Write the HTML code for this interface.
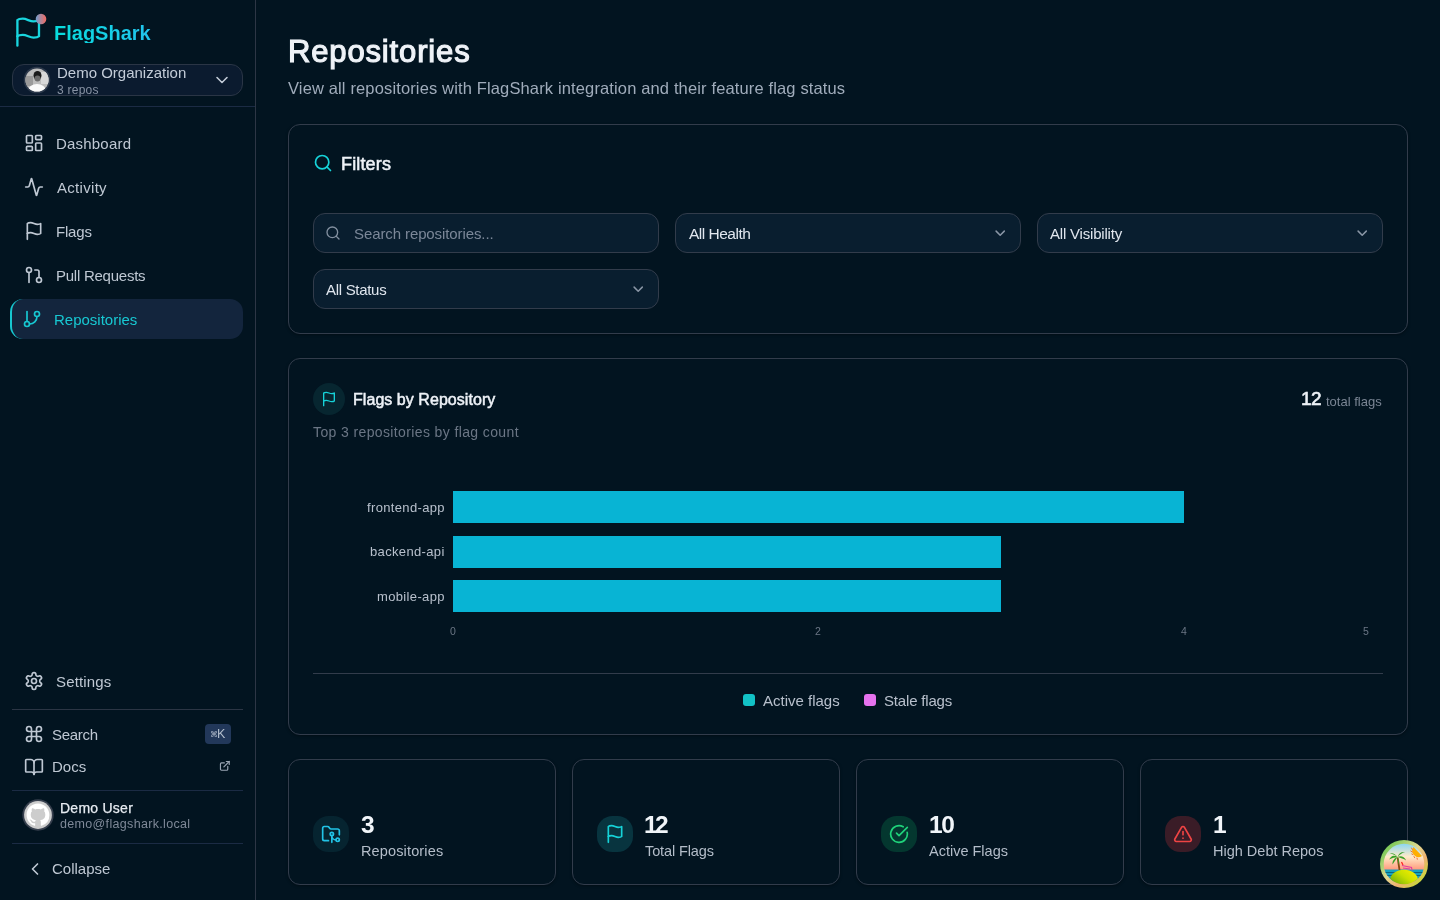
<!DOCTYPE html>
<html><head><meta charset="utf-8">
<style>
*{box-sizing:border-box;margin:0;padding:0}
html,body{width:1440px;height:900px;overflow:hidden;background:#021420;font-family:"Liberation Sans",sans-serif}
.abs{position:absolute;display:block}
.t{position:absolute;line-height:1;white-space:nowrap;will-change:transform}
.box{position:absolute}
</style></head>
<body>
<div class="box" style="left:255px;top:0;width:1px;height:900px;background:#2d3645"></div>
<svg class="abs" style="left:11.8px;top:16.2px" width="32.4" height="32.4" viewBox="0 0 24 24" fill="none" stroke="#19d6df" stroke-width="1.72" stroke-linecap="round" stroke-linejoin="round"><path d="M4 15s1-1 4-1 5 2 8 2 4-1 4-1V3s-1 1-4 1-5-2-8-2-4 1-4 1z"/><line x1="4" x2="4" y1="22" y2="15"/></svg>
<svg class="abs" style="left:35px;top:13px" width="12" height="12"><defs><linearGradient id="dg" x1="0" x2="1" y1="0" y2="0"><stop offset="0" stop-color="#6f9fd0"/><stop offset="1" stop-color="#f4695f"/></linearGradient></defs><circle cx="6" cy="6" r="5.3" fill="url(#dg)"/></svg>
<div class="t" style="left:54px;top:22.77px;font-size:20px;color:transparent;font-weight:bold;background:linear-gradient(90deg,#07dcdc,#22c4ee);-webkit-background-clip:text;background-clip:text;">FlagShark</div>
<div class="box" style="left:12px;top:64px;width:231px;height:32px;border:1px solid #2a3545;border-radius:12px;background:#0b1b2f"></div>
<svg class="abs" style="left:23px;top:66px" width="28" height="28" viewBox="0 0 28 28">
<defs><clipPath id="oc"><circle cx="14" cy="14" r="11.6"/></clipPath></defs>
<circle cx="14" cy="14" r="13.3" fill="#2c394b"/>
<g clip-path="url(#oc)"><rect width="28" height="28" fill="#bdbdbd"/><rect x="2" y="10" width="8" height="10" fill="#9a9a9a"/><rect x="18" y="6" width="8" height="12" fill="#d8d8d8"/>
<ellipse cx="14.5" cy="9.5" rx="4" ry="4.5" fill="#1a1a1a"/><ellipse cx="14.5" cy="12.5" rx="3" ry="3" fill="#6a6a6a"/>
<ellipse cx="14" cy="25" rx="9" ry="7" fill="#fafafa"/></g></svg>
<div class="t" style="left:57px;top:65.10px;font-size:15px;color:#c3ccd8;font-weight:normal;">Demo Organization</div>
<div class="t" style="left:57px;top:83.74px;font-size:12px;color:#8792a3;font-weight:normal;letter-spacing:0.25px;">3 repos</div>
<svg class="abs" style="left:212px;top:70px" width="20" height="20" viewBox="0 0 24 24" fill="none" stroke="#c3ccd8" stroke-width="1.9" stroke-linecap="round" stroke-linejoin="round"><path d="m6 9 6 6 6-6"/></svg>
<div class="box" style="left:0px;top:106px;width:255px;height:1px;background:#1b2b44"></div>
<svg class="abs" style="left:24px;top:133.3px" width="20" height="20" viewBox="0 0 24 24" fill="none" stroke="#bfc8d3" stroke-width="2" stroke-linecap="round" stroke-linejoin="round"><rect x="3" y="3" width="7" height="9" rx="1"/><rect x="14" y="3" width="7" height="5" rx="1"/><rect x="14" y="12" width="7" height="9" rx="1"/><rect x="3" y="16" width="7" height="5" rx="1"/></svg>
<div class="t" style="left:55.5px;top:136.30px;font-size:15px;color:#bfc8d3;font-weight:normal;letter-spacing:0.2px;">Dashboard</div>
<svg class="abs" style="left:24px;top:177.3px" width="20" height="20" viewBox="0 0 24 24" fill="none" stroke="#bfc8d3" stroke-width="2" stroke-linecap="round" stroke-linejoin="round"><path d="M22 12h-2.48a2 2 0 0 0-1.93 1.46l-2.35 8.36a.25.25 0 0 1-.48 0L9.24 2.18a.25.25 0 0 0-.48 0l-2.35 8.36A2 2 0 0 1 4.49 12H2"/></svg>
<div class="t" style="left:56.5px;top:180.30px;font-size:15px;color:#bfc8d3;font-weight:normal;letter-spacing:0.3px;">Activity</div>
<svg class="abs" style="left:24px;top:221.3px" width="20" height="20" viewBox="0 0 24 24" fill="none" stroke="#bfc8d3" stroke-width="2" stroke-linecap="round" stroke-linejoin="round"><path d="M4 15s1-1 4-1 5 2 8 2 4-1 4-1V3s-1 1-4 1-5-2-8-2-4 1-4 1z"/><line x1="4" x2="4" y1="22" y2="15"/></svg>
<div class="t" style="left:55.5px;top:224.30px;font-size:15px;color:#bfc8d3;font-weight:normal;letter-spacing:-0.2px;">Flags</div>
<svg class="abs" style="left:24px;top:265.3px" width="20" height="20" viewBox="0 0 24 24" fill="none" stroke="#bfc8d3" stroke-width="2" stroke-linecap="round" stroke-linejoin="round"><circle cx="18" cy="18" r="3"/><circle cx="6" cy="6" r="3"/><path d="M13 6h3a2 2 0 0 1 2 2v7"/><line x1="6" x2="6" y1="9" y2="21"/></svg>
<div class="t" style="left:55.5px;top:268.30px;font-size:15px;color:#bfc8d3;font-weight:normal;letter-spacing:-0.25px;">Pull Requests</div>
<div class="box" style="left:10px;top:299px;width:233px;height:40px;border-radius:13px;background:#13253d;border-left:2px solid #17c6cf"></div>
<svg class="abs" style="left:22.3px;top:309.3px" width="20" height="20" viewBox="0 0 24 24" fill="none" stroke="#17c8d2" stroke-width="2" stroke-linecap="round" stroke-linejoin="round"><line x1="6" x2="6" y1="3" y2="15"/><circle cx="18" cy="6" r="3"/><circle cx="6" cy="18" r="3"/><path d="M18 9a9 9 0 0 1-9 9"/></svg>
<div class="t" style="left:53.5px;top:311.70px;font-size:15px;color:#17c8d2;font-weight:normal;">Repositories</div>
<svg class="abs" style="left:24px;top:671px" width="20" height="20" viewBox="0 0 24 24" fill="none" stroke="#bfc8d3" stroke-width="2" stroke-linecap="round" stroke-linejoin="round"><path d="M12.22 2h-.44a2 2 0 0 0-2 2v.18a2 2 0 0 1-1 1.73l-.43.25a2 2 0 0 1-2 0l-.15-.08a2 2 0 0 0-2.73.73l-.22.38a2 2 0 0 0 .73 2.730l.15.1a2 2 0 0 1 1 1.72v.51a2 2 0 0 1-1 1.74l-.15.09a2 2 0 0 0-.73 2.73l.22.38a2 2 0 0 0 2.73.73l.15-.08a2 2 0 0 1 2 0l.43.25a2 2 0 0 1 1 1.73V20a2 2 0 0 0 2 2h.44a2 2 0 0 0 2-2v-.18a2 2 0 0 1 1-1.73l.43-.25a2 2 0 0 1 2 0l.15.08a2 2 0 0 0 2.73-.73l.22-.39a2 2 0 0 0-.73-2.73l-.15-.08a2 2 0 0 1-1-1.74v-.5a2 2 0 0 1 1-1.74l.15-.09a2 2 0 0 0 .73-2.73l-.22-.38a2 2 0 0 0-2.73-.73l-.15.08a2 2 0 0 1-2 0l-.43-.25a2 2 0 0 1-1-1.73V4a2 2 0 0 0-2-2z"/><circle cx="12" cy="12" r="3"/></svg>
<div class="t" style="left:55.5px;top:674.30px;font-size:15px;color:#bfc8d3;font-weight:normal;letter-spacing:0.15px;">Settings</div>
<div class="box" style="left:12px;top:709px;width:231px;height:1px;background:#2b3544"></div>
<svg class="abs" style="left:24px;top:724px" width="20" height="20" viewBox="0 0 24 24" fill="none" stroke="#bfc8d3" stroke-width="2" stroke-linecap="round" stroke-linejoin="round"><path d="M15 6v12a3 3 0 1 0 3-3H6a3 3 0 1 0 3 3V6a3 3 0 1 0-3 3h12a3 3 0 1 0-3-3"/></svg>
<div class="t" style="left:52px;top:727.30px;font-size:15px;color:#bfc8d3;font-weight:normal;letter-spacing:-0.3px;">Search</div>
<div class="box" style="left:205px;top:724px;width:26px;height:20px;border-radius:4px;background:#22385a"></div>
<div class="t" style="left:210.3px;top:730.53px;font-size:8px;color:#a9b5c6;font-weight:normal;">⌘</div>
<div class="t" style="left:217.3px;top:727.72px;font-size:12.5px;color:#b4bfcd;font-weight:normal;">K</div>
<svg class="abs" style="left:24px;top:756.5px" width="20" height="20" viewBox="0 0 24 24" fill="none" stroke="#bfc8d3" stroke-width="2" stroke-linecap="round" stroke-linejoin="round"><path d="M12 7v14"/><path d="M3 18a1 1 0 0 1-1-1V4a1 1 0 0 1 1-1h5a4 4 0 0 1 4 4 4 4 0 0 1 4-4h5a1 1 0 0 1 1 1v13a1 1 0 0 1-1 1h-6a3 3 0 0 0-3 3 3 3 0 0 0-3-3z"/></svg>
<div class="t" style="left:51.5px;top:759.00px;font-size:15px;color:#bfc8d3;font-weight:normal;">Docs</div>
<svg class="abs" style="left:219.1px;top:760.1px" width="11.7" height="11.7" viewBox="0 0 24 24" fill="none" stroke="#9aa5b4" stroke-width="2.4" stroke-linecap="round" stroke-linejoin="round"><path d="M15 3h6v6"/><path d="M10 14 21 3"/><path d="M18 13v6a2 2 0 0 1-2 2H5a2 2 0 0 1-2-2V8a2 2 0 0 1 2-2h6"/></svg>
<div class="box" style="left:12px;top:790px;width:231px;height:1px;background:#1b2b44"></div>
<svg class="abs" style="left:22px;top:799px" width="32" height="32" viewBox="0 0 32 32">
<circle cx="16" cy="16" r="15.7" fill="#363f4d"/><circle cx="16" cy="16" r="13.9" fill="#cdcdcd"/>
<g transform="translate(4.6 4.6) scale(1.425)"><path fill="#ffffff" d="M8 0C3.58 0 0 3.58 0 8c0 3.54 2.29 6.53 5.47 7.59.4.07.55-.17.55-.38 0-.19-.01-.82-.01-1.490-2.01.37-2.53-.49-2.69-.94-.09-.23-.48-.94-.82-1.13-.28-.15-.68-.52-.01-.53.63-.01 1.08.58 1.230.82.72 1.21 1.87.87 2.33.66.07-.52.28-.87.51-1.07-1.78-.2-3.64-.89-3.640-3.95 0-.87.31-1.59.82-2.15-.08-.2-.36-1.02.08-2.12 0 0 .67-.21 2.2.82.64-.18 1.32-.27 2-.27.68 0 1.36.09 2 .27 1.53-1.04 2.2-.82 2.2-.82.44 1.1.16 1.92.08 2.12.51.56.82 1.27.82 2.15 0 3.07-1.87 3.75-3.65 3.95.29.25.54.73.54 1.48 0 1.07-.01 1.93-.01 2.2 0 .21.15.46.55.38A8.013 8.013 0 0016 8c0-4.42-3.58-8-8-8z"/></g>
</svg>
<div class="t" style="left:60px;top:800.65px;font-size:14px;color:#e6ebf1;font-weight:normal;letter-spacing:0.25px;-webkit-text-stroke:0.25px #e6ebf1;">Demo User</div>
<div class="t" style="left:60px;top:818.12px;font-size:12.5px;color:#7f8998;font-weight:normal;letter-spacing:0.33px;">demo@flagshark.local</div>
<div class="box" style="left:12px;top:843px;width:231px;height:1px;background:#1b2b44"></div>
<svg class="abs" style="left:24.5px;top:858.5px" width="20" height="20" viewBox="0 0 24 24" fill="none" stroke="#bfc8d3" stroke-width="2" stroke-linecap="round" stroke-linejoin="round"><path d="m15 18-6-6 6-6"/></svg>
<div class="t" style="left:52px;top:861.00px;font-size:15px;color:#bfc8d3;font-weight:normal;">Collapse</div>
<div class="t" style="left:288px;top:36.06px;font-size:31px;color:#eef2f7;font-weight:normal;letter-spacing:0.85px;-webkit-text-stroke:1.15px #eef2f7;">Repositories</div>
<div class="t" style="left:288px;top:79.78px;font-size:16.5px;color:#a0acbb;font-weight:normal;letter-spacing:0.14px;">View all repositories with FlagShark integration and their feature flag status</div>
<div class="box" style="left:288px;top:124px;width:1120px;height:210px;border:1px solid #323c4b;border-radius:12px;box-shadow:0 1px 3px rgba(0,0,0,.35)"></div>
<svg class="abs" style="left:313px;top:153.3px" width="20" height="20" viewBox="0 0 24 24" fill="none" stroke="#16d2d8" stroke-width="2" stroke-linecap="round" stroke-linejoin="round"><circle cx="11" cy="11" r="8"/><path d="m21 21-4.3-4.3"/></svg>
<div class="t" style="left:341px;top:154.56px;font-size:18px;color:#eef2f7;font-weight:normal;letter-spacing:0.15px;-webkit-text-stroke:0.55px #eef2f7;">Filters</div>
<div style="position:absolute;height:40px;border:1px solid #323c4b;border-radius:12px;background:#091e2f;left:313px;top:213px;width:346px"></div>
<div style="position:absolute;height:40px;border:1px solid #323c4b;border-radius:12px;background:#091e2f;left:675px;top:213px;width:346px"></div>
<div style="position:absolute;height:40px;border:1px solid #323c4b;border-radius:12px;background:#091e2f;left:1037px;top:213px;width:346px"></div>
<div style="position:absolute;height:40px;border:1px solid #323c4b;border-radius:12px;background:#091e2f;left:313px;top:269px;width:346px"></div>
<svg class="abs" style="left:325px;top:225px" width="16" height="16" viewBox="0 0 24 24" fill="none" stroke="#8390a0" stroke-width="2" stroke-linecap="round" stroke-linejoin="round"><circle cx="11" cy="11" r="8"/><path d="m21 21-4.3-4.3"/></svg>
<div class="t" style="left:354px;top:226.00px;font-size:15px;color:#7b8798;font-weight:normal;letter-spacing:-0.1px;">Search repositories...</div>
<div class="t" style="left:688.5px;top:226.08px;font-size:15.5px;color:#e0e6ee;font-weight:normal;letter-spacing:-0.5px;">All Health</div>
<div class="t" style="left:1049.5px;top:226.20px;font-size:15px;color:#e0e6ee;font-weight:normal;letter-spacing:-0.2px;">All Visibility</div>
<div class="t" style="left:325.5px;top:282.20px;font-size:15px;color:#e0e6ee;font-weight:normal;letter-spacing:-0.3px;">All Status</div>
<svg class="abs" style="left:992px;top:225px" width="16.4" height="16.4" viewBox="0 0 24 24" fill="none" stroke="#8a96a6" stroke-width="2.2" stroke-linecap="round" stroke-linejoin="round"><path d="m6 9 6 6 6-6"/></svg>
<svg class="abs" style="left:1354px;top:225px" width="16.4" height="16.4" viewBox="0 0 24 24" fill="none" stroke="#8a96a6" stroke-width="2.2" stroke-linecap="round" stroke-linejoin="round"><path d="m6 9 6 6 6-6"/></svg>
<svg class="abs" style="left:629.7px;top:281px" width="16.4" height="16.4" viewBox="0 0 24 24" fill="none" stroke="#8a96a6" stroke-width="2.2" stroke-linecap="round" stroke-linejoin="round"><path d="m6 9 6 6 6-6"/></svg>
<div class="box" style="left:288px;top:358px;width:1120px;height:377px;border:1px solid #323c4b;border-radius:12px;box-shadow:0 1px 3px rgba(0,0,0,.35)"></div>
<div class="box" style="left:313px;top:383px;width:32px;height:32px;border-radius:50%;background:#072630"></div>
<svg class="abs" style="left:321px;top:391px" width="16" height="16" viewBox="0 0 24 24" fill="none" stroke="#16d2d8" stroke-width="2" stroke-linecap="round" stroke-linejoin="round"><path d="M4 15s1-1 4-1 5 2 8 2 4-1 4-1V3s-1 1-4 1-5-2-8-2-4 1-4 1z"/><line x1="4" x2="4" y1="22" y2="15"/></svg>
<div class="t" style="left:353px;top:391.86px;font-size:16px;color:#eef2f7;font-weight:normal;letter-spacing:0.05px;-webkit-text-stroke:0.5px #eef2f7;">Flags by Repository</div>
<div class="t" style="left:313px;top:424.85px;font-size:14px;color:#6b7685;font-weight:normal;letter-spacing:0.38px;">Top 3 repositories by flag count</div>
<div class="t" style="left:1300.5px;top:389.42px;font-size:19px;color:#eef2f7;font-weight:normal;letter-spacing:-0.6px;-webkit-text-stroke:0.6px #eef2f7;">12</div>
<div class="t" style="left:1326px;top:394.80px;font-size:13px;color:#7a8594;font-weight:normal;">total flags</div>
<div class="box" style="left:453px;top:491px;width:731px;height:32px;background:#08b4d4"></div>
<div class="box" style="left:453px;top:536px;width:548px;height:32px;background:#08b4d4"></div>
<div class="box" style="left:453px;top:580px;width:548px;height:32px;background:#08b4d4"></div>
<div class="t" style="right:995px;top:500.70px;font-size:13px;color:#b8c0cc;font-weight:normal;letter-spacing:0.35px;">frontend-app</div>
<div class="t" style="right:995px;top:544.50px;font-size:13px;color:#b8c0cc;font-weight:normal;letter-spacing:0.35px;">backend-api</div>
<div class="t" style="right:995px;top:589.70px;font-size:13px;color:#b8c0cc;font-weight:normal;letter-spacing:0.35px;">mobile-app</div>
<div class="t" style="left:433px;width:40px;text-align:center;top:626.11px;font-size:10.5px;color:#6b7685">0</div>
<div class="t" style="left:798px;width:40px;text-align:center;top:626.11px;font-size:10.5px;color:#6b7685">2</div>
<div class="t" style="left:1164px;width:40px;text-align:center;top:626.11px;font-size:10.5px;color:#6b7685">4</div>
<div class="t" style="left:1346px;width:40px;text-align:center;top:626.11px;font-size:10.5px;color:#6b7685">5</div>
<div class="box" style="left:313px;top:673px;width:1070px;height:1px;background:#323c4b"></div>
<div class="box" style="left:743px;top:694px;width:12px;height:12px;border-radius:3px;background:#12c2c6"></div>
<div class="t" style="left:762.5px;top:693.10px;font-size:15px;color:#b8c0cc;font-weight:normal;">Active flags</div>
<div class="box" style="left:864px;top:694px;width:12px;height:12px;border-radius:3px;background:#e672ee"></div>
<div class="t" style="left:884px;top:693.10px;font-size:15px;color:#b8c0cc;font-weight:normal;letter-spacing:-0.18px;">Stale flags</div>
<div class="box" style="left:288px;top:759px;width:268px;height:126px;border:1px solid #323c4b;border-radius:12px;box-shadow:0 1px 3px rgba(0,0,0,.35)"></div>
<div class="box" style="left:313px;top:816px;width:36px;height:36px;border-radius:15.5px;background:#062430"></div>
<svg class="abs" style="left:321px;top:824px" width="20" height="20" viewBox="0 0 24 24" fill="none" stroke="#22c3e6" stroke-width="2" stroke-linecap="round" stroke-linejoin="round"><path d="M9 20H4a2 2 0 0 1-2-2V5a2 2 0 0 1 2-2h3.9a2 2 0 0 1 1.69.9l.81 1.2a2 2 0 0 0 1.67.9H20a2 2 0 0 1 2 2v5"/><circle cx="13" cy="12" r="2"/><path d="M18 19c-2.8 0-5-2.2-5-5v8"/><circle cx="20" cy="19" r="2"/></svg>
<div class="t" style="left:361px;top:813.26px;font-size:24.5px;color:#f1f5f9;font-weight:bold;">3</div>
<div class="t" style="left:361px;top:843.73px;font-size:14.5px;color:#b4bdc9;font-weight:normal;letter-spacing:0.14px;">Repositories</div>
<div class="box" style="left:572px;top:759px;width:268px;height:126px;border:1px solid #323c4b;border-radius:12px;box-shadow:0 1px 3px rgba(0,0,0,.35)"></div>
<div class="box" style="left:597px;top:816px;width:36px;height:36px;border-radius:15.5px;background:#08343f"></div>
<svg class="abs" style="left:605px;top:824px" width="20" height="20" viewBox="0 0 24 24" fill="none" stroke="#16d2d8" stroke-width="2" stroke-linecap="round" stroke-linejoin="round"><path d="M4 15s1-1 4-1 5 2 8 2 4-1 4-1V3s-1 1-4 1-5-2-8-2-4 1-4 1z"/><line x1="4" x2="4" y1="22" y2="15"/></svg>
<div class="t" style="left:644px;top:813.26px;font-size:24.5px;color:#f1f5f9;font-weight:bold;letter-spacing:-2.6px;">12</div>
<div class="t" style="left:645px;top:843.73px;font-size:14.5px;color:#b4bdc9;font-weight:normal;letter-spacing:-0.12px;">Total Flags</div>
<div class="box" style="left:856px;top:759px;width:268px;height:126px;border:1px solid #323c4b;border-radius:12px;box-shadow:0 1px 3px rgba(0,0,0,.35)"></div>
<div class="box" style="left:881px;top:816px;width:36px;height:36px;border-radius:15.5px;background:#04372f"></div>
<svg class="abs" style="left:889px;top:824px" width="20" height="20" viewBox="0 0 24 24" fill="none" stroke="#1fd27a" stroke-width="2" stroke-linecap="round" stroke-linejoin="round"><path d="M21.801 10A10 10 0 1 1 17 3.335"/><path d="m9 11 3 3L22 4"/></svg>
<div class="t" style="left:929px;top:813.26px;font-size:24.5px;color:#f1f5f9;font-weight:bold;letter-spacing:-1.5px;">10</div>
<div class="t" style="left:929px;top:843.73px;font-size:14.5px;color:#b4bdc9;font-weight:normal;">Active Flags</div>
<div class="box" style="left:1140px;top:759px;width:268px;height:126px;border:1px solid #323c4b;border-radius:12px;box-shadow:0 1px 3px rgba(0,0,0,.35)"></div>
<div class="box" style="left:1165px;top:816px;width:36px;height:36px;border-radius:15.5px;background:#3a1c27"></div>
<svg class="abs" style="left:1173px;top:824px" width="20" height="20" viewBox="0 0 24 24" fill="none" stroke="#ef4444" stroke-width="2" stroke-linecap="round" stroke-linejoin="round"><path d="m21.73 18-8-14a2 2 0 0 0-3.48 0l-8 14A2 2 0 0 0 4 21h16a2 2 0 0 0 1.73-3"/><path d="M12 9v4"/><path d="M12 17h.01"/></svg>
<div class="t" style="left:1213px;top:813.26px;font-size:24.5px;color:#f1f5f9;font-weight:bold;">1</div>
<div class="t" style="left:1213px;top:843.73px;font-size:14.5px;color:#b4bdc9;font-weight:normal;">High Debt Repos</div>
<svg class="abs" style="left:1380px;top:840px" width="48" height="48" viewBox="0 0 48 48">
<defs>
<linearGradient id="rim" x1="0.1" y1="0.1" x2="0.9" y2="0.9"><stop offset="0" stop-color="#6cc850"/><stop offset="0.45" stop-color="#e0d890"/><stop offset="0.7" stop-color="#f0b070"/><stop offset="1" stop-color="#c0e030"/></linearGradient>
<linearGradient id="sky" x1="0" y1="0" x2="0" y2="1"><stop offset="0.05" stop-color="#80d4f4"/><stop offset="0.35" stop-color="#ffeac8"/><stop offset="0.62" stop-color="#ff9a7c"/></linearGradient>
<linearGradient id="isl" x1="0" y1="1" x2="1" y2="0"><stop offset="0" stop-color="#3a9010"/><stop offset="0.6" stop-color="#c8e000"/><stop offset="1" stop-color="#fff000"/></linearGradient>
<clipPath id="ic"><circle cx="24" cy="24" r="20.3"/></clipPath>
</defs>
<circle cx="24" cy="24" r="24" fill="url(#rim)"/>
<g clip-path="url(#ic)">
<rect width="48" height="48" fill="url(#sky)"/>
<path d="M33.5 7 A6.3 6.3 0 0 0 42 16 Z" fill="#ffae00"/>
<path d="M31.5 8 l0.8 1.5 M30.8 11 l1.4 1 M31.8 14 l1.2 0.6 M34 16.5 l0.7 1.2 M37 18 l0.3 1.2" stroke="#f07030" stroke-width="1" stroke-linecap="round"/>
<rect x="0" y="29.5" width="48" height="12" fill="#16a2c0"/>
<path d="M0 32.5 H48 M0 35.5 H48" stroke="#0a6480" stroke-width="1"/>
<path d="M19.5 30 C19 26 18.2 22 17.6 17.5" stroke="#8a4a12" stroke-width="1.8" fill="none"/>
<path d="M22 25.5 L31.5 27.5 L32 30.5 M23 28 L30 29" stroke="#e040a0" stroke-width="1.2" fill="none"/>
<path d="M21.5 22 L23 25" stroke="#ff2020" stroke-width="1.2"/>
<g fill="#3aa028">
<path d="M17.6 17 C14 14.5 11 15.5 9.2 19.5 C12.5 17.8 15 17.6 17.6 17Z"/>
<path d="M17.6 17 C14.5 18 12.2 20.5 12.5 24.6 C14.5 21.5 16 19.6 17.6 17Z"/>
<path d="M17.6 17 C20.5 15.5 24 16 26.2 20.5 C23.5 18.6 21 18 17.6 17Z"/>
<path d="M17.6 17 C18.5 13.5 21.5 11.5 25 12 C22 13 19.8 14.6 17.6 17Z"/>
<path d="M17.6 17 C15.5 14 12.5 12.6 10 13.5 C13 14.2 15.5 15.2 17.6 17Z"/>
<path d="M17.6 17 C19 19.5 19.6 22 18.8 24.5 C18.2 21.8 17.8 19.6 17.6 17Z"/>
</g>
<ellipse cx="24" cy="40.5" rx="14" ry="10.8" fill="url(#isl)"/>
</g>
</svg>
</body></html>
